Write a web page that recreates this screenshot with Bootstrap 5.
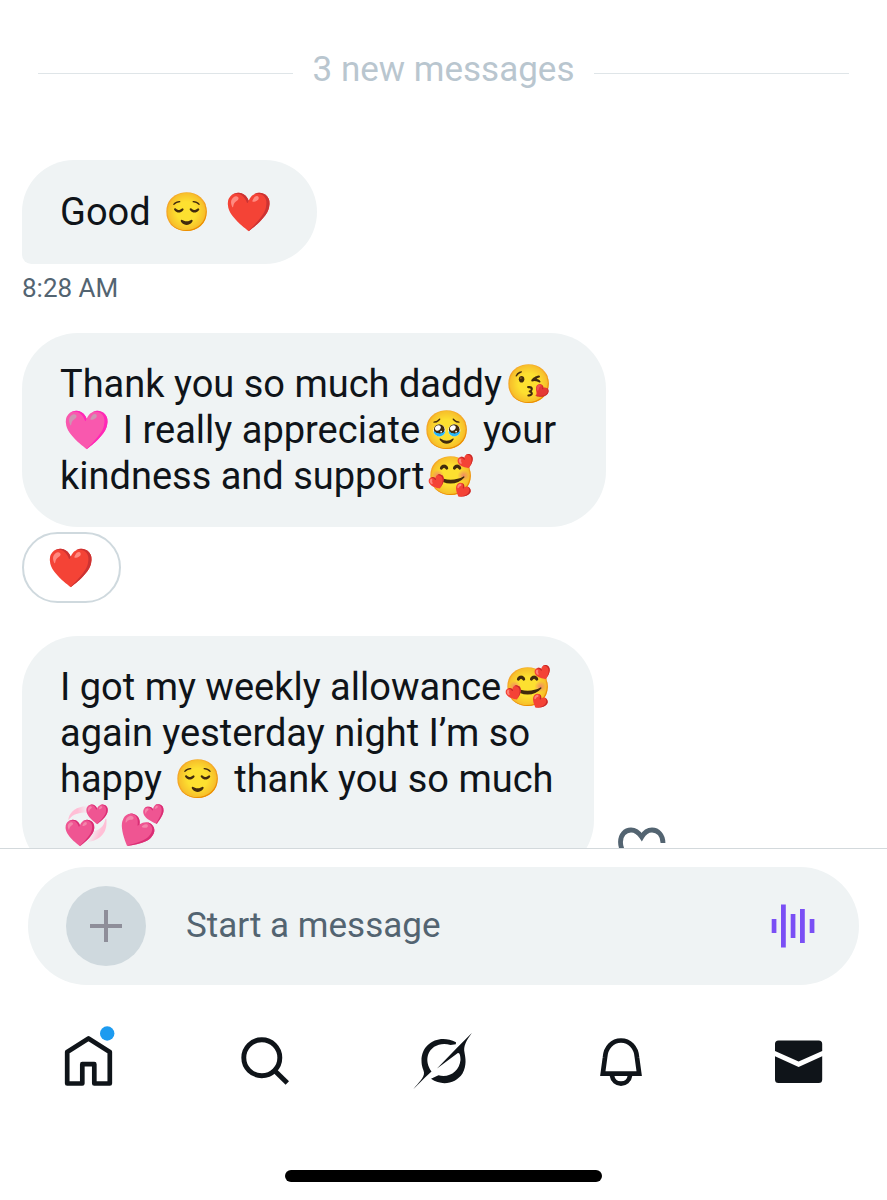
<!DOCTYPE html>
<html lang="en">
<head>
<meta charset="utf-8">
<meta name="viewport" content="width=device-width, initial-scale=1">
<title>Messages</title>
<link rel="stylesheet" href="https://cdn.jsdelivr.net/npm/bootstrap@5.3.0/dist/css/bootstrap.min.css">
<script src="https://cdn.jsdelivr.net/npm/bootstrap@5.3.0/dist/js/bootstrap.bundle.min.js"></script>
<style>
  :root { --ink: #0f1419; --muted: #536471; --fog: #eff3f4; --edge: #cfd9de; }
  body { font-family: Roboto, "Noto Color Emoji", sans-serif; color: var(--ink); background: #fff; }
  .thread { min-height: 0; padding: 46px 22px 0; }
  .divider { gap: 20px; padding: 0 16px; margin-bottom: 66px; color: #b9c6cf; font-size: 35px; line-height: 48px; }
  .divider::before, .divider::after { content: ""; flex: 1; height: 1px; margin-top: 6px; background: #dfe5e8; }
  .bubble { background: var(--fog); border-radius: 56px; padding: 28px 30px 28px 38px; font-size: 38px; line-height: 46px; }
  .bubble-tail { border-bottom-left-radius: 10px; padding: 29px 41px 29px 38px; }
  .bubble-wide { max-width: 584px; }
  .bubble-mid { max-width: 572px; }
  .emo { display: inline-block; margin: 0 3px; }
  .emo-pink { filter: brightness(.74) hue-rotate(-10deg) saturate(2.1); }
  .stamp { color: var(--muted); font-size: 26px; line-height: 32px; margin: 8px 0 29px; }
  .reaction { border: 2px solid var(--edge); border-radius: 36px; background: #fff; width: 99px; height: 71px; margin: 5px 0 33px; font-size: 38px; line-height: 40px; }
  .like { width: 48px; margin: 0 0 3px 24px; }
  .composer { border-top: 1px solid #d3d9dc; padding: 18px 28px 0; }
  .entry { background: var(--fog); border-radius: 60px; padding: 19px 38px; }
  .add { width: 80px; height: 80px; background: var(--edge); }
  .entry input { font-size: 35px; line-height: 48px; color: var(--ink); outline: 0; min-width: 0; margin-left: 40px; }
  .entry input::placeholder { color: var(--muted); opacity: 1; }
  .tabs { padding: 43px 0 0; }
  .home-bar { width: 317px; height: 12px; background: #000; margin: 78px auto 18px; }
  svg { display: block; overflow: visible; }
</style>
</head>
<body>
<div class="vh-100 d-flex flex-column overflow-hidden">
  <main class="thread flex-grow-1 overflow-hidden">
    <div class="divider d-flex align-items-center"><span>3 new messages</span></div>

    <div class="d-flex"><div class="bubble bubble-tail">Good <span class="emo">😌</span> <span class="emo">❤️</span></div></div>
    <div class="stamp">8:28 AM</div>

    <div class="d-flex"><div class="bubble bubble-wide">Thank you so much daddy<span class="emo">😘</span><span class="emo emo-pink">🩷</span> I really appreciate<span class="emo">🥹</span> your kindness and support<span class="emo">🥰</span></div></div>
    <button type="button" class="reaction d-flex align-items-center justify-content-center p-0">❤️</button>

    <div class="d-flex align-items-end">
      <div class="bubble bubble-mid">I got my weekly allowance<span class="emo">🥰</span> again yesterday night I’m so happy <span class="emo">😌</span> thank you so much <span class="emo">💞 💕</span></div>
      <button type="button" class="like btn p-0 border-0" aria-label="Add reaction">
        <svg width="48" height="46" viewBox="0 0 48 46" fill="none" stroke="#536471" stroke-width="4.800"><path d="M45 16C45 8 40 3 34 3 29 3 26 6 23.700 10 21 6 18 3 13 3 7 3 2.500 8 2.500 15 2.500 27 14 36 24 42M38 25v18M29 34h18"/></svg>
      </button>
    </div>
  </main>

  <footer class="bg-white">
    <form class="composer">
      <div class="entry d-flex align-items-center">
        <button type="button" class="add btn rounded-circle border-0 p-0 d-flex align-items-center justify-content-center flex-shrink-0" aria-label="Add attachment">
          <svg width="32" height="32" viewBox="0 0 32 32" stroke="#8e8e99" stroke-width="4"><path d="M16 0v32M0 16h32"/></svg>
        </button>
        <input type="text" class="flex-grow-1 border-0 bg-transparent p-0" placeholder="Start a message" aria-label="Start a message">
        <button type="button" class="btn border-0 p-0 me-1" aria-label="Record voice message">
          <svg width="46" height="44" viewBox="0 0 46 44" fill="#7a4ff5"><path d="M.7 15h4.700v14H.7zM10 .5h4.800v43H10zM19.700 10h4.700v24h-4.700zM29 5h4.800v34H29zM38.700 15h4.700v14h-4.700z"/></svg>
        </button>
      </div>
    </form>

    <nav class="tabs d-flex" aria-label="Main">
      <a href="#" class="col d-flex justify-content-center" aria-label="Home">
        <svg width="64" height="64" viewBox="57 1028 64 64" fill="none" stroke="#0f1419" stroke-width="4.700" stroke-linejoin="round"><path d="M67.200 1052 88.500 1038.500 109.800 1052V1083.500H94.300V1064.200H82.300V1083.500H67.200Z"/><circle cx="107.200" cy="1033.500" r="7.200" fill="#1d9bf0" stroke="none"/></svg>
      </a>
      <a href="#" class="col d-flex justify-content-center" aria-label="Search">
        <svg width="64" height="64" viewBox="234 1028 64 64" fill="none" stroke="#0f1419" stroke-width="4.900"><circle cx="261.800" cy="1057.700" r="18"/><path d="M274.500 1070.500 287.300 1083"/></svg>
      </a>
      <a href="#" class="col d-flex justify-content-center" aria-label="Grok">
        <svg width="64" height="64" viewBox="412 1028 64 64" fill="#0f1419"><path d="M437 1068.500 457.500 1053.300C459.300 1052 460.500 1055 460.500 1060 459.500 1071 449 1078.500 438.500 1075.300L431 1078.800C442 1086.500 456 1083.500 462.500 1073.500 467 1065 465.500 1058 464.500 1052.500 463.200 1046.500 466 1041 471.800 1033L458 1046.800ZM455.800 1044.300 450.500 1045C441 1042 431 1046 428 1055 426.500 1060 427.500 1066 431.500 1071.500L425 1077.500 413.500 1089C418 1083 424.500 1078 424 1072.500 423.500 1069 421.500 1067 421.500 1060.500 421.500 1043.500 439 1033.500 456 1042.300Z"/></svg>
      </a>
      <a href="#" class="col d-flex justify-content-center" aria-label="Notifications">
        <svg width="64" height="64" viewBox="589 1028 64 64" fill="none" stroke="#0f1419" stroke-width="4.700"><path d="M605 1057.500C605.700 1047 612.500 1040.500 621 1040.500S636.300 1047 637 1057.500L639.200 1073.700H602.800ZM611.800 1075C613.500 1086.500 628.500 1086.500 630.200 1075"/></svg>
      </a>
      <a href="#" class="col d-flex justify-content-center" aria-label="Messages">
        <svg width="64" height="64" viewBox="766 1028 64 64" fill="#0f1419"><path d="M775 1051V1044Q775 1040.500 778.500 1040.500H818.700Q822.200 1040.500 822.200 1044V1051L798.600 1061.500ZM775 1056.200 798.600 1067 822.200 1056.200V1079.500Q822.200 1083 818.700 1083H778.500Q775 1083 775 1079.500Z"/></svg>
      </a>
    </nav>
    <div class="home-bar rounded-pill"></div>
  </footer>
</div>
</body>
</html>
